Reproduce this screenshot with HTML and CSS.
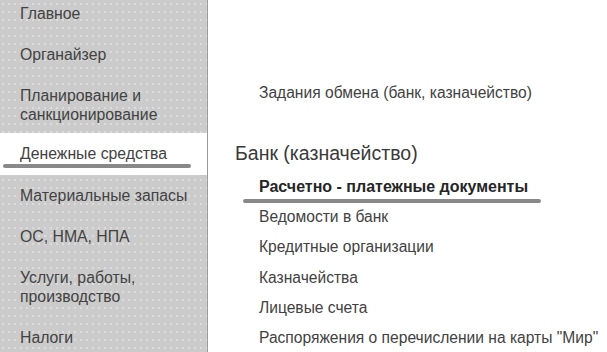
FILE: index.html
```html
<!DOCTYPE html>
<html lang="ru">
<head>
    <meta charset="UTF-8">
    <title>Денежные средства</title>
    <link rel="stylesheet" href="styles.css">
</head>
<body>
    <div class="sidebar">
        <div class="nav-item first">Главное</div>
        <div class="nav-item">Органайзер</div>
        <div class="nav-item">Планирование и<br>санкционирование</div>
        <div class="nav-item active">Денежные средства</div>
        <div class="nav-item">Материальные запасы</div>
        <div class="nav-item">ОС, НМА, НПА</div>
        <div class="nav-item">Услуги, работы,<br>производство</div>
        <div class="nav-item">Налоги</div>
    </div>
    <div class="content">
        <div class="link top-link">Задания обмена (банк, казначейство)</div>
        <div class="group-title">Банк (казначейство)</div>
        <div class="link current">Расчетно - платежные документы</div>
        <div class="link">Ведомости в банк</div>
        <div class="link">Кредитные организации</div>
        <div class="link">Казначейства</div>
        <div class="link">Лицевые счета</div>
        <div class="link">Распоряжения о перечислении на карты "Мир"</div>
    </div>
</body>
</html>
```

FILE: styles.css
```css
body {
    margin: 0;
    padding: 0;
    display: flex;
    height: 352px;
    overflow: hidden;
    font-family: "Liberation Sans", Arial, sans-serif;
    color: #424242;
    background-color: #fff;
}

.sidebar {
    width: 207px;
    flex-shrink: 0;
    border-right: 1px solid #9a9a9a;
    background-color: #cbcbcb;
    background-image: radial-gradient(circle, #dcdcdc 0.8px, transparent 1.2px);
    background-size: 6px 8px;
}

.nav-item {
    padding: 11px 0 11px 20px;
    font-size: 15.8px;
    line-height: 19px;
}

.nav-item.first {
    margin-top: -7.5px;
}

.nav-item.active {
    position: relative;
    margin-top: -2px;
    background-color: #fff;
    padding-top: 11.5px;
    padding-bottom: 11.5px;
}

.nav-item.active::after {
    content: "";
    position: absolute;
    left: 3px;
    width: 188px;
    bottom: 7px;
    height: 4px;
    border-radius: 2px;
    background-color: #898989;
}

.content {
    padding-left: 27px;
    padding-top: 83px;
}

.link {
    padding-left: 24px;
    font-size: 15.6px;
    line-height: 20px;
    margin-bottom: 10.3px;
}

.top-link {
    margin-bottom: 38px;
}

.group-title {
    font-size: 19.5px;
    line-height: 24px;
    color: #3a3a3a;
    margin-bottom: 12px;
}

.link.current {
    position: relative;
    font-size: 16px;
    font-weight: bold;
    color: #262626;
    margin-bottom: 10px;
}

.link.current::after {
    content: "";
    position: absolute;
    left: 8px;
    width: 298px;
    bottom: -6px;
    height: 4px;
    border-radius: 2px;
    background-color: #898989;
}
```
